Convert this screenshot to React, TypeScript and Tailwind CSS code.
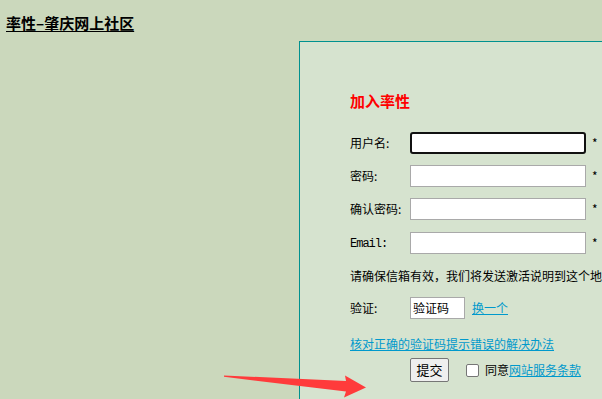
import React from 'react';

const cjk = { fontFamily: '"Noto Sans CJK SC", "Liberation Sans", sans-serif' };

const Row: React.FC<{ label: React.ReactNode; focused?: boolean; className?: string }> = ({ label, focused, className }) => (
  <div className={`flex items-center h-[22px] ${className ?? ''}`}>
    <div className="w-[60px] text-[12px] leading-[16px] text-black">{label}</div>
    {focused ? (
      <div className="w-[176px] h-[22px] bg-white border-2 border-[#111] rounded-[3px]"></div>
    ) : (
      <div className="w-[176px] h-[22px] bg-white border border-[#a9a9a9]"></div>
    )}
    <span className="ml-[6px] text-[12px] text-black">*</span>
  </div>
);

const App: React.FC = () => {
  return (
    <div className="relative w-[602px] h-[399px] overflow-hidden bg-[#cbd8bc]" style={cjk}>
      {/* Header */}
      <div className="h-[41px] pl-[6px] pt-[10px]">
        <a className="text-[15px] leading-[16px] font-bold text-black underline underline-offset-2">率性–肇庆网上社区</a>
      </div>

      <div className="flex">
        <div className="w-[299px] shrink-0"></div>
        {/* Panel */}
        <div className="w-[400px] h-[400px] shrink-0 bg-[#d6e3cf] border-l border-t border-[#00918f] pl-[50px] pt-[51px]">
          <h2 className="text-[15px] leading-[16px] font-bold text-[#ff0000]">加入率性</h2>

          <Row className="mt-[23px]" label="用户名:" focused />
          <Row className="mt-[11px]" label="密码:" />
          <Row className="mt-[11px]" label="确认密码:" />
          <Row
            className="mt-[12px]"
            label={<span className="tracking-[-1px]" style={{ fontFamily: '"Liberation Mono", monospace' }}>Email:</span>}
          />

          <p className="mt-[14px] text-[12px] leading-[16px] text-black whitespace-nowrap">
            请确保信箱有效，我们将发送激活说明到这个地址。
          </p>

          <div className="mt-[13px] flex items-center h-[22px]">
            <div className="w-[60px] text-[12px] text-black">验证:</div>
            <div className="w-[55px] h-[22px] bg-white border border-[#a9a9a9] text-[12px] leading-[20px] pl-[2px] text-black">验证码</div>
            <a className="ml-[7px] text-[12px] text-[#0099cc] underline">换一个</a>
          </div>

          <div className="mt-[11px] h-[16px]">
            <a className="text-[12px] leading-[16px] text-[#0099cc] underline">核对正确的验证码提示错误的解决办法</a>
          </div>

          <div className="mt-[12px] flex items-center h-[24px]">
            <div className="w-[60px]"></div>
            <button className="w-[39px] h-[24px] bg-[#efefef] border border-[#767676] rounded-[2px] text-[13px] text-black">提交</button>
            <span className="ml-[17px] w-[13px] h-[13px] bg-white border border-[#767676] rounded-[2px]"></span>
            <span className="ml-[6px] text-[12px] text-black">同意</span>
            <a className="text-[12px] text-[#0099cc] underline">网站服务条款</a>
          </div>
        </div>
      </div>

      {/* Red arrow annotation */}
      <svg className="absolute left-0 top-0" width="602" height="399" viewBox="0 0 602 399">
        <polygon
          points="224,375.5 346,381 345,375.5 366,387.5 344,397.5 346,391.5 224,376.8"
          fill="#ff3b3b"
        />
      </svg>
    </div>
  );
};

export default App;
